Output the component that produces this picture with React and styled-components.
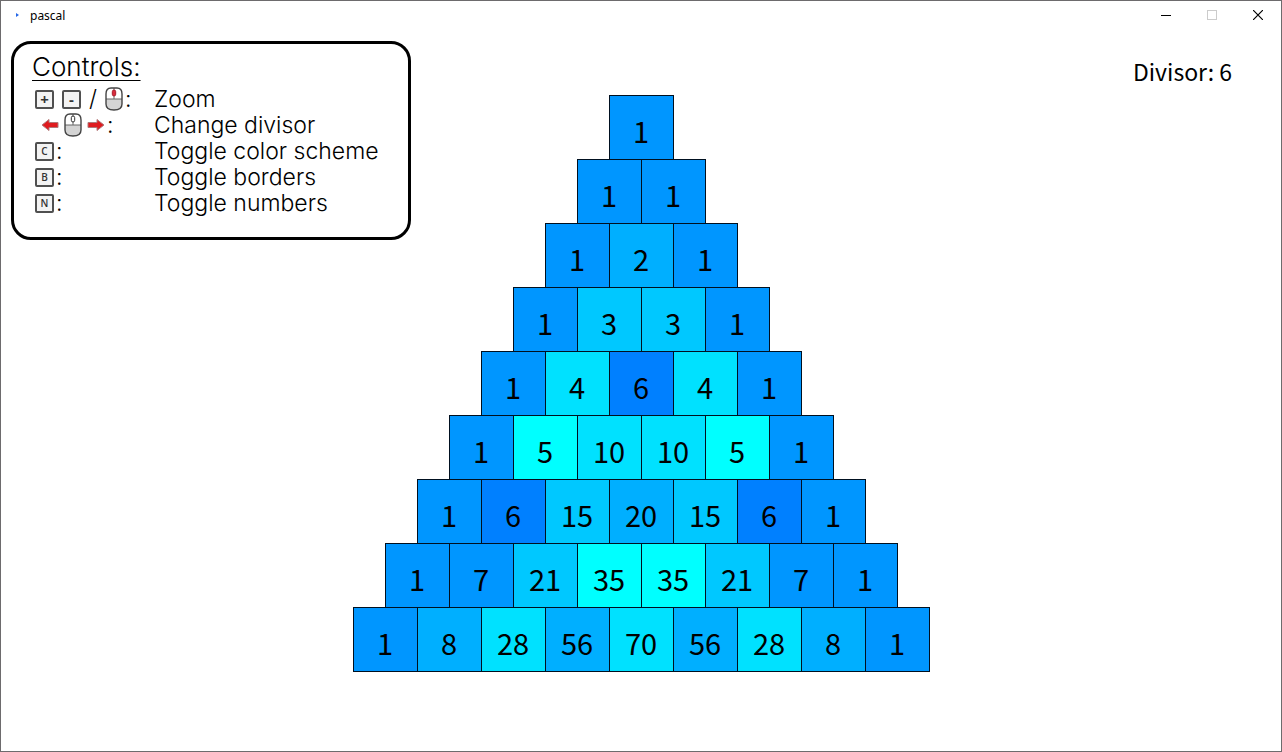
import React from 'react';
import styled, { createGlobalStyle } from 'styled-components';

const GlobalStyle = createGlobalStyle`
  *, *::before, *::after { box-sizing: border-box; }
  html, body, #root { height: 100%; }
  body { margin: 0; background: #fff; color: #000; }
`;

const Window = styled.div`
  min-height: 100%;
  display: flex;
  flex-direction: column;
  border: 1px solid #6d6b6d;
  background: #fff;
`;

const TitleBar = styled.header`
  display: flex;
  align-items: center;
  height: 28px;
  padding-left: 13px;
`;

const Title = styled.h1`
  flex: 1;
  margin: 0;
  padding: 1px 0 0 10px;
  font: 400 12px/17px "Noto Sans", "Open Sans", sans-serif;
`;

const WindowButton = styled.button`
  display: flex;
  align-items: center;
  justify-content: center;
  width: 46px;
  height: 28px;
  padding: 0;
  border: 0;
  background: none;
  color: ${(p) => (p.disabled ? '#cccccc' : '#000')};
`;

const Canvas = styled.main`
  flex: 1;
  display: grid;
  grid-template-columns: 1fr;
  padding: 12px 10px;
`;

const Controls = styled.section`
  grid-area: 1 / 1;
  justify-self: start;
  align-self: start;
  width: 400px;
  padding: 7px 18px 21px;
  border: 3px solid #000;
  border-radius: 20px;
  background: #fff;
  font-family: Inter, "Open Sans", sans-serif;
  font-weight: 300;
`;

const Heading = styled.h2`
  margin: 0;
  font-size: 26px;
  font-weight: 300;
  line-height: 32px;
  text-decoration: underline;
  text-decoration-thickness: 1px;
  text-underline-offset: 4px;
`;

const Shortcuts = styled.dl`
  display: grid;
  grid-template-columns: 122px 1fr;
  grid-auto-rows: 26px;
  align-items: center;
  margin: 0;
  padding-top: 3px;
  font-size: 23px;
  line-height: 26px;
  white-space: nowrap;
`;

const Keys = styled.dt`
  display: flex;
  align-items: center;
  gap: 2px;
  padding-left: ${(p) => p.$inset || 3}px;
`;

const Combo = styled.span`
  display: flex;
  align-items: center;
  gap: ${(p) => p.$gap}px;
`;

const Action = styled.dd`
  margin: 0;
`;

const Key = styled.kbd`
  display: flex;
  align-items: center;
  justify-content: center;
  width: 19px;
  height: 19px;
  border: 2px solid #505050;
  border-radius: 2px;
  background: #f3f3f3;
  color: #333;
  font: ${(p) => (p.$sign ? '700 15px' : '600 10px')}/15px "Open Sans", sans-serif;
`;

const Divisor = styled.output`
  grid-area: 1 / 1;
  justify-self: end;
  align-self: start;
  padding: 13px 39px 0 0;
  font: 400 23px/34px "Noto Sans CJK JP", sans-serif;
`;

const Pyramid = styled.div`
  grid-area: 1 / 1;
  justify-self: center;
  align-self: start;
  display: flex;
  flex-direction: column;
  align-items: center;
  padding: 54px 0 0 1px;
`;

const Row = styled.div`
  display: flex;
  margin-bottom: -1px;
`;

const shades = ['#0080ff', '#0096ff', '#00afff', '#00c8ff', '#00e1ff', '#00ffff'];

const Cell = styled.div`
  width: 65px;
  height: 65px;
  margin-right: -1px;
  padding: 14px 1px 0 0;
  border: 1px solid #001020;
  background: ${(p) => shades[p.$rest]};
  font: 400 29px/40px "Noto Sans CJK JP", sans-serif;
  text-align: center;

  &:last-child { margin-right: 0; }
`;

const Mouse = ({ wheel }) => (
  <svg width="18" height="24" viewBox="0 0 18 24" aria-hidden="true">
    <path d="M1 11V7Q1 1 6 1H12Q17 1 17 7V17Q17 23 9 23Q1 23 1 17Z" fill="#fff" />
    <path d="M1 12H17V17Q17 23 9 23Q1 23 1 17Z" fill="#d4d4d4" />
    <path d="M1 12H17M9 1V12" stroke="#666" strokeWidth="1" />
    <path d="M1 11V7Q1 1 6 1H12Q17 1 17 7V17Q17 23 9 23Q1 23 1 17Z" fill="none" stroke="#444" strokeWidth="1.4" />
    <rect x="7.3" y="3" width="3.4" height="6" rx="1.7" fill={wheel} stroke={wheel === '#fff' ? '#333' : '#a81c2c'} />
  </svg>
);

const Arrow = ({ left }) => (
  <svg width="18" height="14" viewBox="0 0 18 14" aria-hidden="true">
    <path
      d={left ? 'M1 7L8 1.500V4.500H17V9.500H8V12.500Z' : 'M17 7L10 1.500V4.500H1V9.500H10V12.500Z'}
      fill="#df1b1f"
      stroke="#b0787a"
      strokeLinejoin="round"
    />
  </svg>
);

const triangle = [];
for (let n = 0; n < 9; n += 1) {
  const previous = triangle[n - 1];
  triangle.push(
    Array.from({ length: n + 1 }, (_, k) => (k === 0 || k === n ? 1 : previous[k - 1] + previous[k])),
  );
}

export default function App() {
  const divisor = 6;
  return (
    <>
      <GlobalStyle />
      <Window>
        <TitleBar>
          <svg width="6" height="6" viewBox="0 0 6 6" aria-hidden="true">
            <path d="M2 1L5 3L2 5Z" fill="#2467e8" />
          </svg>
          <Title>pascal</Title>
          <WindowButton type="button" aria-label="Minimize">
            <svg width="10" height="10" viewBox="0 0 10 10"><path d="M0 5.500H10" stroke="currentColor" /></svg>
          </WindowButton>
          <WindowButton type="button" aria-label="Maximize" disabled>
            <svg width="10" height="10" viewBox="0 0 10 10"><rect x="0.500" y="0.500" width="9" height="9" fill="none" stroke="currentColor" /></svg>
          </WindowButton>
          <WindowButton type="button" aria-label="Close">
            <svg width="10" height="10" viewBox="0 0 10 10"><path d="M0 0L10 10M10 0L0 10" stroke="currentColor" strokeWidth="1.2" /></svg>
          </WindowButton>
        </TitleBar>
        <Canvas>
          <Pyramid>
            {triangle.map((row, n) => (
              <Row key={n}>
                {row.map((value, k) => (
                  <Cell key={k} $rest={value % divisor}>{value}</Cell>
                ))}
              </Row>
            ))}
          </Pyramid>
          <Controls>
            <Heading>Controls:</Heading>
            <Shortcuts>
              <Keys>
                <Combo $gap={8}>
                  <Key $sign>+</Key>
                  <Key $sign>-</Key>
                  <span>/</span>
                  <Mouse wheel="#d92b3c" />
                </Combo>
                <span>:</span>
              </Keys>
              <Action>Zoom</Action>
              <Keys $inset={9}>
                <Combo $gap={5}>
                  <Arrow left />
                  <Mouse wheel="#fff" />
                  <Arrow />
                </Combo>
                <span>:</span>
              </Keys>
              <Action>Change divisor</Action>
              <Keys><Key>C</Key><span>:</span></Keys>
              <Action>Toggle color scheme</Action>
              <Keys><Key>B</Key><span>:</span></Keys>
              <Action>Toggle borders</Action>
              <Keys><Key>N</Key><span>:</span></Keys>
              <Action>Toggle numbers</Action>
            </Shortcuts>
          </Controls>
          <Divisor>Divisor: {divisor}</Divisor>
        </Canvas>
      </Window>
    </>
  );
}
